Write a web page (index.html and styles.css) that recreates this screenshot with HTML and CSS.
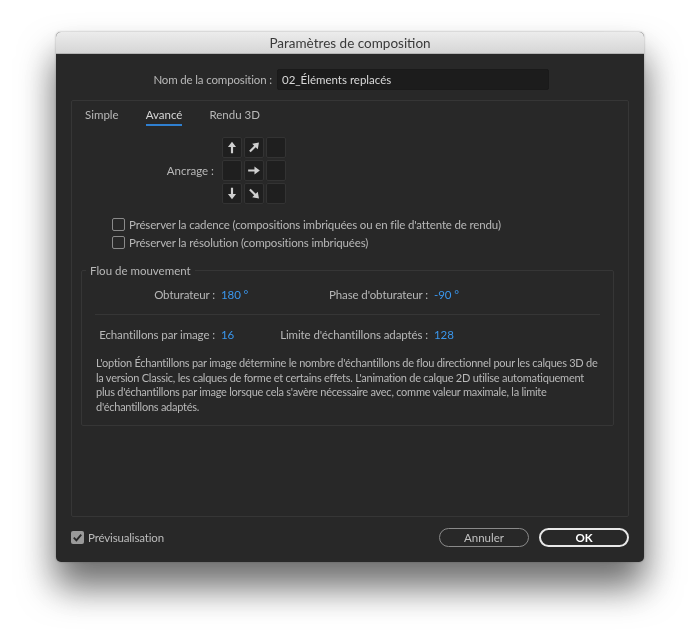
FILE: index.html
```html
<!DOCTYPE html>
<html lang="fr">
<head>
    <meta charset="UTF-8">
    <title>Paramètres de composition</title>
    <link rel="stylesheet" href="styles.css">
</head>
<body>
    <div class="window">
        <div class="titlebar">Paramètres de composition</div>
        <div class="name-row">
            <label class="name-label" for="compName">Nom de la composition :</label>
            <div class="name-input" id="compName">02_Éléments replacés</div>
        </div>

        <div class="panel">
            <div class="tabs">
                <span class="tab">Simple</span>
                <span class="tab active">Avancé</span>
                <span class="tab">Rendu 3D</span>
            </div>

            <div class="anchor-row">
                <span class="anchor-label">Ancrage :</span>
                <div class="anchor-grid">
                    <div class="cell"><svg viewBox="0 0 20 20"><path d="M10 3.5 L5.5 9.5 H8.8 V16.5 H11.2 V9.5 H14.5 Z"/></svg></div>
                    <div class="cell"><svg viewBox="0 0 20 20"><path d="M15.5 4.5 L8 5.8 L10.2 8.1 L4.6 13.7 L6.3 15.4 L11.9 9.8 L14.2 12 Z"/></svg></div>
                    <div class="cell"></div>
                    <div class="cell"></div>
                    <div class="cell"><svg viewBox="0 0 20 20"><path d="M16.5 10 L10.5 5.5 V8.8 H3.5 V11.2 H10.5 V14.5 Z"/></svg></div>
                    <div class="cell"></div>
                    <div class="cell"><svg viewBox="0 0 20 20"><path d="M10 16.5 L5.5 10.5 H8.8 V3.5 H11.2 V10.5 H14.5 Z"/></svg></div>
                    <div class="cell"><svg viewBox="0 0 20 20"><path d="M15.5 15.5 L14.2 8 L11.9 10.2 L6.3 4.6 L4.6 6.3 L10.2 11.9 L8 14.2 Z"/></svg></div>
                    <div class="cell"></div>
                </div>
            </div>

            <div class="checks">
                <label class="check"><span class="box"></span>Préserver la cadence (compositions imbriquées ou en file d'attente de rendu)</label>
                <label class="check"><span class="box"></span>Préserver la résolution (compositions imbriquées)</label>
            </div>

            <fieldset class="blur">
                <legend>Flou de mouvement</legend>
                <div class="params first">
                    <span class="plabel">Obturateur :</span>
                    <span class="pvalue">180 °</span>
                    <span class="plabel">Phase d'obturateur :</span>
                    <span class="pvalue">-90 °</span>
                </div>
                <div class="sep"></div>
                <div class="params">
                    <span class="plabel">Echantillons par image :</span>
                    <span class="pvalue">16</span>
                    <span class="plabel">Limite d'échantillons adaptés :</span>
                    <span class="pvalue">128</span>
                </div>
                <p class="note">L'option Échantillons par image détermine le nombre d'échantillons de flou directionnel pour les calques 3D de la version Classic, les calques de forme et certains effets. L'animation de calque 2D utilise automatiquement plus d'échantillons par image lorsque cela s'avère nécessaire avec, comme valeur maximale, la limite d'échantillons adaptés.</p>
            </fieldset>
        </div>

        <div class="footer">
            <label class="check preview"><span class="box checked"><svg viewBox="0 0 14 14"><path d="M3 7.2 L5.8 10 L11 3.8" /></svg></span>Prévisualisation</label>
            <div class="buttons">
                <button class="btn">Annuler</button>
                <button class="btn ok">OK</button>
            </div>
        </div>
    </div>
</body>
</html>
```

FILE: styles.css
```css
body {
    margin: 0;
    padding: 32px 0 0 56px;
    background-color: #fff;
    font-family: Lato, "Open Sans", sans-serif;
    font-size: 11px;
    color: #b8b8b8;
    height: 642px;
    box-sizing: border-box;
}
.window {
    width: 588px;
    height: 530px;
    background-color: #282828;
    border-radius: 5px;
    filter: drop-shadow(0 24px 18px rgba(0, 0, 0, 0.5)) drop-shadow(0 0 1px rgba(0, 0, 0, 0.3));
    box-sizing: border-box;
}
.titlebar {
    height: 21px;
    line-height: 22px;
    text-align: center;
    font-size: 13.5px;
    color: #3a3a3a;
    background: linear-gradient(#ececec, #d6d6d6);
    border-bottom: 1px solid #b4b4b4;
    border-radius: 5px 5px 0 0;
}
.name-row {
    display: flex;
    align-items: center;
    gap: 5px;
    padding: 15px 0 10px;
}
.name-label {
    width: 216px;
    text-align: right;
    font-size: 11.5px;
    letter-spacing: -0.15px;
}
.name-input {
    width: 262px;
    height: 19px;
    line-height: 19px;
    padding: 0 4px;
    background-color: #1c1c1c;
    border: 1px solid #1a1a1a;
    border-radius: 2px;
    color: #d8d8d8;
    font-size: 11.5px;
}
.panel {
    margin-left: 15px;
    width: 556px;
    height: 415px;
    border: 1px solid #363636;
    border-radius: 2px;
}
.tabs {
    display: flex;
    gap: 27px;
    padding: 7px 0 0 13px;
}
.tab {
    font-size: 11.5px;
    padding-bottom: 3px;
    border-bottom: 2px solid transparent;
}
.tab.active {
    color: #d6d6d6;
    border-bottom-color: #2f7fd0;
}
.anchor-row {
    display: flex;
    align-items: center;
    gap: 8px;
    margin-top: 11px;
    padding-left: 86px;
}
.anchor-label {
    font-size: 11.5px;
    width: 56px;
    text-align: right;
    white-space: nowrap;
}
.anchor-grid {
    display: grid;
    grid-template-columns: repeat(3, 20px);
    grid-template-rows: repeat(3, 21px);
    gap: 2px;
}
.cell {
    background-color: #1f1f1f;
    border: 1px solid #333;
    border-radius: 2px;
    box-sizing: border-box;
}
.cell svg {
    display: block;
    width: 18px;
    height: 19px;
    fill: #cfcfcf;
}
.checks {
    display: flex;
    flex-direction: column;
    gap: 5px;
    margin-top: 14px;
    padding-left: 40px;
}
.check {
    display: flex;
    align-items: center;
    gap: 4px;
    font-size: 11.5px;
    letter-spacing: -0.15px;
}
.box {
    width: 11px;
    height: 11px;
    border: 1px solid #8a8a8a;
    border-radius: 2px;
}
.box.checked {
    width: 13px;
    height: 13px;
    border: none;
    background-color: #9a9a9a;
}
.box.checked svg {
    display: block;
    width: 13px;
    height: 13px;
    fill: none;
    stroke: #282828;
    stroke-width: 2;
}
.blur {
    margin: 15px 0 0 9px;
    width: 533px;
    height: 162px;
    padding: 0;
    border: 1px solid #363636;
    border-radius: 2px;
    box-sizing: border-box;
}
.blur legend {
    margin-left: 4px;
    padding: 0 4px;
    font-size: 11.5px;
}
.params {
    display: grid;
    grid-template-columns: 133px 53px 148px auto;
    column-gap: 6px;
    font-size: 11.5px;
    letter-spacing: -0.1px;
    white-space: nowrap;
}
.params.first {
    margin-top: 11px;
}
.plabel {
    text-align: right;
}
.pvalue {
    color: #3a96ec;
}
.sep {
    height: 1px;
    background-color: #363636;
    margin: 13px 13px 13px 13px;
}
.note {
    margin: 15px 10px 0 14px;
    font-size: 11px;
    line-height: 14.5px;
    letter-spacing: -0.25px;
}
.footer {
    display: flex;
    align-items: center;
    justify-content: space-between;
    padding: 11px 15px 0 15px;
}
.preview {
    color: #bcbcbc;
}
.buttons {
    display: flex;
    gap: 10px;
}
.btn {
    width: 90px;
    height: 19px;
    border: 1px solid #8a8a8a;
    border-radius: 10px;
    background: transparent;
    color: #c0c0c0;
    font-family: Lato, sans-serif;
    font-size: 11.5px;
    padding: 0;
}
.btn.ok {
    border: 2px solid #e8e8e8;
    color: #fff;
    font-weight: bold;
}
```
